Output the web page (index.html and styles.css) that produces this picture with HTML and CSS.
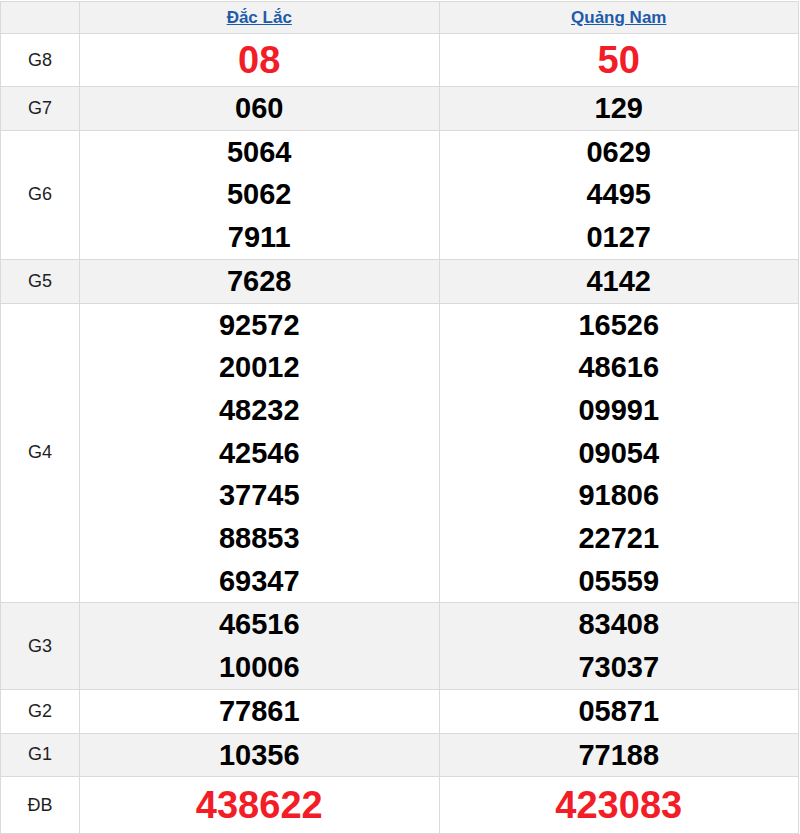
FILE: index.html
```html
<!DOCTYPE html>
<html lang="vi">
<head>
<meta charset="utf-8">
<title>Kết quả xổ số</title>
<link rel="stylesheet" href="styles.css">
</head>
<body>
<table class="kq">
  <colgroup><col class="c-label"><col class="c-prov"><col class="c-prov"></colgroup>
  <thead>
    <tr class="head">
      <th></th>
      <th><a href="#">Đắc Lắc</a></th>
      <th><a href="#">Quảng Nam</a></th>
    </tr>
  </thead>
  <tbody>
    <tr class="g8">
      <td class="lbl">G8</td>
      <td class="num red big">08</td>
      <td class="num red big">50</td>
    </tr>
    <tr class="alt">
      <td class="lbl">G7</td>
      <td class="num">060</td>
      <td class="num">129</td>
    </tr>
    <tr>
      <td class="lbl">G6</td>
      <td class="num"><div>5064</div><div>5062</div><div>7911</div></td>
      <td class="num"><div>0629</div><div>4495</div><div>0127</div></td>
    </tr>
    <tr class="alt">
      <td class="lbl">G5</td>
      <td class="num">7628</td>
      <td class="num">4142</td>
    </tr>
    <tr>
      <td class="lbl">G4</td>
      <td class="num"><div>92572</div><div>20012</div><div>48232</div><div>42546</div><div>37745</div><div>88853</div><div>69347</div></td>
      <td class="num"><div>16526</div><div>48616</div><div>09991</div><div>09054</div><div>91806</div><div>22721</div><div>05559</div></td>
    </tr>
    <tr class="alt">
      <td class="lbl">G3</td>
      <td class="num"><div>46516</div><div>10006</div></td>
      <td class="num"><div>83408</div><div>73037</div></td>
    </tr>
    <tr>
      <td class="lbl">G2</td>
      <td class="num">77861</td>
      <td class="num">05871</td>
    </tr>
    <tr class="alt">
      <td class="lbl">G1</td>
      <td class="num">10356</td>
      <td class="num">77188</td>
    </tr>
    <tr class="db">
      <td class="lbl">ĐB</td>
      <td class="num red big">438622</td>
      <td class="num red big">423083</td>
    </tr>
  </tbody>
</table>
</body>
</html>
```

FILE: styles.css
```css
html, body {
  margin: 0;
  padding: 0;
  background: #ffffff;
}
body {
  padding-top: 1px;
  font-family: "Liberation Sans", Arial, sans-serif;
  color: #222;
}
.kq {
  width: 799px;
  border-collapse: collapse;
  table-layout: fixed;
}
.c-label { width: 79px; }
.kq th, .kq td {
  border: 1px solid #dadada;
  padding: 0;
  text-align: center;
  vertical-align: middle;
}
.head th {
  background: #f2f2f2;
  height: 31px;
  font-size: 17px;
  font-weight: bold;
}
.head a {
  color: #1d5ca8;
  text-decoration: underline;
}
.alt td { background: #f2f2f2; }
.lbl {
  font-size: 18px;
  color: #1f1f1f;
}
.num {
  font-size: 29px;
  font-weight: bold;
  color: #000;
  line-height: 42.7px;
}
.red { color: #f21d27; }
.big { font-size: 38px; }
.g8 .num { line-height: 52px; }
.db .num { line-height: 56px; }
```
